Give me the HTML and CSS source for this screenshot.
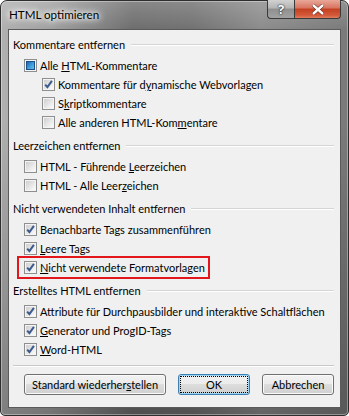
FILE: index.html
```html
<!DOCTYPE html>
<html lang="de">
<head>
    <meta charset="UTF-8">
    <title>HTML optimieren</title>
    <link rel="stylesheet" href="styles.css">
</head>
<body>
    <svg width="0" height="0" class="defs">
        <defs>
            <linearGradient id="boxfill" x1="0" y1="0" x2="1" y2="1">
                <stop offset="0" stop-color="#cfcfcf"/>
                <stop offset="1" stop-color="#fbfbfb"/>
            </linearGradient>
            <linearGradient id="bluefill" x1="0" y1="0" x2="1" y2="1">
                <stop offset="0" stop-color="#1c5ea8"/>
                <stop offset="0.5" stop-color="#3c9ad6"/>
                <stop offset="1" stop-color="#6cc4ee"/>
            </linearGradient>
            <symbol id="box" viewBox="0 0 13 13">
                <rect x="0.5" y="0.5" width="12" height="12" fill="#f4f4f4" stroke="#8e8f8f"/>
                <rect x="2" y="2" width="9" height="9" fill="url(#boxfill)"/>
            </symbol>
            <symbol id="tick" viewBox="0 0 13 13">
                <rect x="0.5" y="0.5" width="12" height="12" fill="#f4f4f4" stroke="#8e8f8f"/>
                <rect x="2" y="2" width="9" height="9" fill="url(#boxfill)"/>
                <path d="M3.2 6.6 L5.4 9.2 L9.9 2.8" fill="none" stroke="#3d5a8f" stroke-width="2"/>
            </symbol>
            <symbol id="mixed" viewBox="0 0 13 13">
                <rect x="0.5" y="0.5" width="12" height="12" fill="#f4f4f4" stroke="#8e8f8f"/>
                <rect x="2.5" y="2.5" width="8" height="8" fill="url(#bluefill)" stroke="#1d4f8a"/>
            </symbol>
        </defs>
    </svg>

    <div class="window">
        <div class="titlebar">
            <span class="title">HTML optimieren</span>
            <div class="controls">
                <div class="ctl help">?</div>
                <div class="ctl close">
                    <svg width="14" height="11" viewBox="0 0 14 11">
                        <path d="M2 1 L12 10 M12 1 L2 10" stroke="#5a1a10" stroke-width="3.6" fill="none"/>
                        <path d="M2 1 L12 10 M12 1 L2 10" stroke="#fff" stroke-width="2.4" fill="none"/>
                    </svg>
                </div>
            </div>
        </div>

        <div class="client">
            <!-- Kommentare -->
            <div class="group first">Kommentare entfernen</div>
            <div class="row l1"><svg class="cb"><use href="#mixed"/></svg><span>Alle <u>H</u>TML-Kommentare</span></div>
            <div class="row l2"><svg class="cb"><use href="#tick"/></svg><span>Kommentare für d<u>y</u>namische Webvorlagen</span></div>
            <div class="row l2"><svg class="cb"><use href="#box"/></svg><span>S<u>k</u>riptkommentare</span></div>
            <div class="row l2"><svg class="cb"><use href="#box"/></svg><span>Alle anderen HTML-Kom<u>m</u>entare</span></div>

            <!-- Leerzeichen -->
            <div class="group">Leerzeichen entfernen</div>
            <div class="row l1"><svg class="cb"><use href="#box"/></svg><span>HTML - Führende <u>L</u>eerzeichen</span></div>
            <div class="row l1"><svg class="cb"><use href="#box"/></svg><span>HTML - Alle Leer<u>z</u>eichen</span></div>

            <!-- Inhalt -->
            <div class="group">Nicht verwendeten Inhalt entfernen</div>
            <div class="row l1"><svg class="cb"><use href="#tick"/></svg><span>Benachbarte Tags zusammenführen</span></div>
            <div class="row l1"><svg class="cb"><use href="#tick"/></svg><span><u>L</u>eere Tags</span></div>
            <div class="row l1">
                <div class="marked"><svg class="cb"><use href="#tick"/></svg><span><u>N</u>icht verwendete Formatvorlagen</span></div>
            </div>

            <!-- Erstelltes HTML -->
            <div class="group">Erstelltes HTML entfernen</div>
            <div class="row l1"><svg class="cb"><use href="#tick"/></svg><span>Attribute für Durchpausbilder und interaktive Schaltflächen</span></div>
            <div class="row l1"><svg class="cb"><use href="#tick"/></svg><span><u>G</u>enerator und ProgID-Tags</span></div>
            <div class="row l1"><svg class="cb"><use href="#tick"/></svg><span><u>W</u>ord-HTML</span></div>

            <div class="separator"></div>

            <div class="buttons">
                <button class="btn std">Standard wiederher<u>s</u>tellen</button>
                <button class="btn ok"><span class="focus">OK</span></button>
                <button class="btn cancel">Abbrechen</button>
            </div>
        </div>
    </div>
</body>
</html>
```

FILE: styles.css
```css
body {
    margin: 0;
    font-family: Lato, "Noto Sans", sans-serif;
    font-size: 11px;
    color: #000;
    background-color: #fff;
}
.defs {
    position: absolute;
    width: 0;
    height: 0;
}
.window {
    width: 349px;
    height: 416px;
    box-sizing: border-box;
    border: 1px solid #2e2e2e;
    border-radius: 7px 7px 5px 5px;
    padding: 0 7px 7px 7px;
    display: flex;
    flex-direction: column;
    background:
        linear-gradient(180deg, rgba(255,255,255,0.18) 0, rgba(255,255,255,0) 28px, rgba(0,0,0,0) 120px, rgba(0,0,0,0.28) 100%),
        linear-gradient(90deg, #b0b0b0 0%, #a2a2a2 14%, #6e6e6e 38%, #727272 55%, #8c8c8c 75%, #7a7a7a 100%);
    box-shadow: inset 0 0 0 1px rgba(255,255,255,0.35);
}
.titlebar {
    height: 28px;
    display: flex;
    align-items: flex-start;
}
.title {
    margin: 7px 0 0 1px;
    font-size: 11.6px;
    text-shadow: 0 0 8px #fff, 0 0 8px #fff, 0 0 4px #fff;
}
.controls {
    margin-left: auto;
    margin-top: -1px;
    display: flex;
}
.ctl {
    height: 19px;
    box-sizing: border-box;
    border: 1px solid #3a3a3a;
    border-top: none;
    display: flex;
    align-items: center;
    justify-content: center;
}
.help {
    width: 27px;
    border-right: none;
    border-radius: 0 0 0 4px;
    background: linear-gradient(180deg, #d2d2d2 0%, #b4b4b4 45%, #8f8f8f 50%, #a2a2a2 100%);
    color: #fff;
    font-family: "Noto Sans", sans-serif;
    font-weight: bold;
    font-size: 13px;
    text-shadow: 0 0 2px #222, 0 0 1px #000;
}
.close {
    width: 47px;
    border-radius: 0 0 4px 0;
    background: linear-gradient(180deg, #e9a899 0%, #d7735f 45%, #c2401f 50%, #d45a3a 85%, #e07e5c 100%);
}
.client {
    flex: 1;
    border: 1px solid #5a5a5a;
    background-color: #f0f0f0;
    padding: 5px 6px 0 4px;
}
.group {
    height: 19px;
    display: flex;
    align-items: center;
    margin: 4px 0 2px 0;
    white-space: nowrap;
}
.group.first {
    margin-top: 0;
}
.group::after {
    content: "";
    flex: 1;
    height: 1px;
    margin-left: 6px;
    background-color: #d5d5d5;
    border-bottom: 1px solid #fff;
}
.row {
    height: 19px;
    display: flex;
    align-items: center;
    white-space: nowrap;
}
.l1 {
    padding-left: 11px;
}
.l2 {
    padding-left: 29px;
}
.cb {
    width: 13px;
    height: 13px;
    margin-right: 3px;
    flex: none;
}
.marked {
    display: flex;
    align-items: center;
    height: 19px;
    margin-left: -5px;
    padding: 0 3px 0 5px;
    outline: 2px solid #e3161b;
}
.separator {
    margin-top: 6px;
    height: 1px;
    background-color: #c8c8c8;
    border-bottom: 1px solid #fff;
}
.buttons {
    display: flex;
    gap: 12px;
    margin-top: 7px;
    padding-left: 11px;
}
.btn {
    height: 21px;
    padding: 0;
    font-family: inherit;
    font-size: 11px;
    color: #000;
    white-space: nowrap;
    border: 1px solid #707070;
    border-radius: 3px;
    background: linear-gradient(180deg, #f2f2f2 0%, #ebebeb 49%, #dddddd 50%, #cfcfcf 100%);
    box-shadow: inset 0 0 0 1px #fbfbfb;
}
.std {
    width: 142px;
}
.ok {
    width: 72px;
    border-color: #3c7fb1;
    box-shadow: inset 0 0 0 1px #9fd5f5;
    display: flex;
    padding: 2px;
}
.ok .focus {
    flex: 1;
    display: flex;
    align-items: center;
    justify-content: center;
    outline: 1px dotted #000;
}
.cancel {
    width: 72px;
}
```
